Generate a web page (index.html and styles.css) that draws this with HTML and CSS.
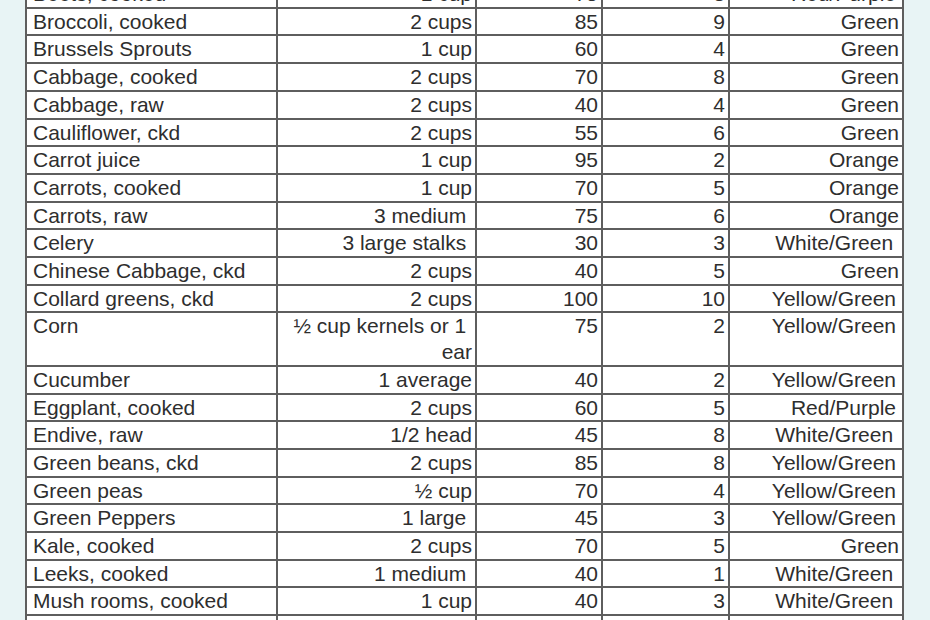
FILE: index.html
```html
<!DOCTYPE html>
<html>
<head>
<meta charset="utf-8">
<link rel="stylesheet" href="styles.css">
</head>
<body>
<div class="page">
<table class="veg">
<colgroup>
<col class="c1"><col class="c2"><col class="c3"><col class="c4"><col class="c5">
</colgroup>
<tbody>
<tr><td>Beets, cooked</td><td class="r">1 cup</td><td class="r">75</td><td class="r">3</td><td class="r sp">Red/Purple</td></tr>
<tr><td>Broccoli, cooked</td><td class="r">2 cups</td><td class="r">85</td><td class="r">9</td><td class="r">Green</td></tr>
<tr><td>Brussels Sprouts</td><td class="r">1 cup</td><td class="r">60</td><td class="r">4</td><td class="r">Green</td></tr>
<tr><td>Cabbage, cooked</td><td class="r">2 cups</td><td class="r">70</td><td class="r">8</td><td class="r">Green</td></tr>
<tr><td>Cabbage, raw</td><td class="r">2 cups</td><td class="r">40</td><td class="r">4</td><td class="r">Green</td></tr>
<tr><td>Cauliflower, ckd</td><td class="r">2 cups</td><td class="r">55</td><td class="r">6</td><td class="r">Green</td></tr>
<tr><td>Carrot juice</td><td class="r">1 cup</td><td class="r">95</td><td class="r">2</td><td class="r">Orange</td></tr>
<tr><td>Carrots, cooked</td><td class="r">1 cup</td><td class="r">70</td><td class="r">5</td><td class="r">Orange</td></tr>
<tr><td>Carrots, raw</td><td class="r">3 medium&nbsp;</td><td class="r">75</td><td class="r">6</td><td class="r">Orange</td></tr>
<tr><td>Celery</td><td class="r">3 large stalks&nbsp;</td><td class="r">30</td><td class="r">3</td><td class="r">White/Green&nbsp;</td></tr>
<tr><td>Chinese Cabbage, ckd</td><td class="r">2 cups</td><td class="r">40</td><td class="r">5</td><td class="r">Green</td></tr>
<tr><td>Collard greens, ckd</td><td class="r">2 cups</td><td class="r">100</td><td class="r">10</td><td class="r sp">Yellow/Green</td></tr>
<tr><td>Corn</td><td class="r">½ cup kernels or 1&nbsp;<br>ear</td><td class="r">75</td><td class="r">2</td><td class="r sp">Yellow/Green</td></tr>
<tr><td>Cucumber</td><td class="r">1 average</td><td class="r">40</td><td class="r">2</td><td class="r sp">Yellow/Green</td></tr>
<tr><td>Eggplant, cooked</td><td class="r">2 cups</td><td class="r">60</td><td class="r">5</td><td class="r sp">Red/Purple</td></tr>
<tr><td>Endive, raw</td><td class="r">1/2 head</td><td class="r">45</td><td class="r">8</td><td class="r">White/Green&nbsp;</td></tr>
<tr><td>Green beans, ckd</td><td class="r">2 cups</td><td class="r">85</td><td class="r">8</td><td class="r sp">Yellow/Green</td></tr>
<tr><td>Green peas</td><td class="r">½ cup</td><td class="r">70</td><td class="r">4</td><td class="r sp">Yellow/Green</td></tr>
<tr><td>Green Peppers</td><td class="r">1 large&nbsp;</td><td class="r">45</td><td class="r">3</td><td class="r sp">Yellow/Green</td></tr>
<tr><td>Kale, cooked</td><td class="r">2 cups</td><td class="r">70</td><td class="r">5</td><td class="r">Green</td></tr>
<tr><td>Leeks, cooked</td><td class="r">1 medium&nbsp;</td><td class="r">40</td><td class="r">1</td><td class="r">White/Green&nbsp;</td></tr>
<tr><td>Mush rooms, cooked</td><td class="r">1 cup</td><td class="r">40</td><td class="r">3</td><td class="r">White/Green&nbsp;</td></tr>
<tr><td>Okra, cooked</td><td class="r">1 cup</td><td class="r">50</td><td class="r">4</td><td class="r">Green</td></tr>
</tbody>
</table>
</div>
</body>
</html>
```

FILE: styles.css
```css
html, body {
  margin: 0;
  padding: 0;
  background: #e8f4f5;
  overflow: hidden;
}
.page {
  width: 930px;
  height: 620px;
  overflow: hidden;
  padding-left: 25px;
  box-sizing: border-box;
}
.veg {
  margin-top: -21px;
  border-collapse: collapse;
  table-layout: fixed;
  width: 877px;
  background: #ffffff;
  font-family: "Liberation Sans", Arial, sans-serif;
  font-size: 21px;
  color: #2e2e2e;
}
.c1 { width: 251px; }
.c2 { width: 199px; }
.c3 { width: 126px; }
.c4 { width: 127px; }
.c5 { width: 174px; }
.veg td {
  border: 2px solid #5e5e5e;
  padding: 0 3px 0 6px;
  line-height: 25.7px;
  vertical-align: top;
  white-space: nowrap;
  overflow: hidden;
}
.veg td.r {
  text-align: right;
  padding-left: 3px;
  padding-right: 3px;
}
.veg td.sp {
  padding-right: 6px;
}
```
